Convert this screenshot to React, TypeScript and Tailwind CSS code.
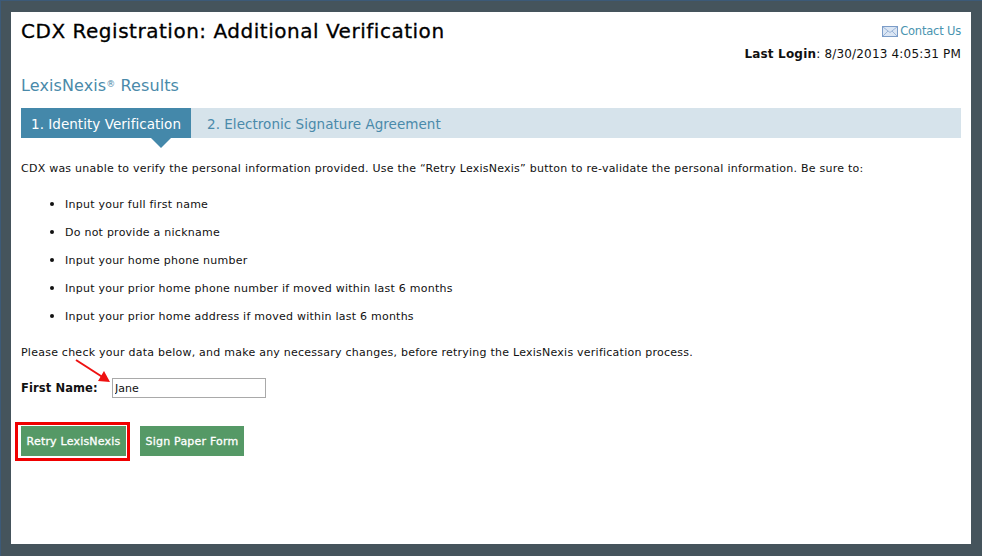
const items = [
  'Input your full first name',
  'Do not provide a nickname',
  'Input your home phone number',
  'Input your prior home phone number if moved within last 6 months',
  'Input your prior home address if moved within last 6 months',
];

const App = () => {
  return (
    <div className="h-[556px] w-[982px] overflow-hidden border-t border-l border-t-[#3c5a78] border-l-[#3c5a78] bg-[#45545c] pl-[10px] pr-[11px] pt-[11px] font-['DejaVu_Sans',sans-serif] text-[11px] text-[#111]">
      <div className="relative h-[532px] w-[960px] bg-white px-[10px]">
        {/* Header */}
        <div className="flex justify-between">
          <h1 className="pt-[7px] text-[20px] leading-[24px] font-normal tracking-[0.52px] text-black [-webkit-text-stroke:0.3px_black]">
            CDX Registration: Additional Verification
          </h1>
          <div className="flex flex-col items-end pt-[12px]">
            <a className="flex h-[15px] items-center text-[11.5px] tracking-[-0.2px] text-[#4a94b0]">
              <svg width="16" height="11" viewBox="0 0 16 11" className="mr-[2px]">
                <rect x="0.5" y="0.5" width="15" height="10" fill="#dbe6f4" stroke="#7b9cc8" />
                <path d="M1 1 L8 6.5 L15 1 M1 10 L6 5 M15 10 L10 5" fill="none" stroke="#9db6d8" />
              </svg>
              Contact Us
            </a>
            <div className="mt-[8px] h-[14px] text-[12px] leading-[15px] tracking-[0.18px]">
              <span className="font-bold">Last Login</span>: 8/30/2013 4:05:31 PM
            </div>
          </div>
        </div>

        <h2 className="mt-[15px] text-[16px] leading-[20px] font-normal tracking-[0.1px] text-[#4a8aaa]">
          LexisNexis<sup className="text-[9px]">®</sup> Results
        </h2>

        {/* Tabs */}
        <div className="mt-[12px] flex h-[30px] items-center bg-[#d6e3eb] text-[13.5px] tracking-[0.04px]">
          <div className="relative flex h-[30px] w-[170px] items-center bg-[#4488aa] pt-[2px] pl-[10px] text-white">
            1. Identity Verification
            <span className="absolute left-[130px] top-[30px] h-0 w-0 border-x-[10px] border-t-[10px] border-x-transparent border-t-[#4488aa]" />
          </div>
          <div className="pt-[2px] pl-[16px] text-[#4a8aaa]">2. Electronic Signature Agreement</div>
        </div>

        {/* Body */}
        <p className="mt-[23px] leading-[16px] tracking-[0.24px]">
          CDX was unable to verify the personal information provided. Use the “Retry LexisNexis” button to re-validate the personal information. Be sure to:
        </p>
        <ul className="mt-[18px] ml-[44px] list-disc leading-[16px] tracking-[0.24px] marker:text-[14px]">
          {items.map((t) => (
            <li key={t} className="mb-[10px]">{t}</li>
          ))}
        </ul>
        <p className="mt-[20px] leading-[16px] tracking-[0.24px]">
          Please check your data below, and make any necessary changes, before retrying the LexisNexis verification process.
        </p>

        {/* Field */}
        <div className="mt-[17px] flex items-center">
          <label className="w-[91px] pt-[2px] text-[11.5px] font-bold tracking-[0.1px]">First Name:</label>
          <input
            defaultValue="Jane"
            className="h-[20px] w-[154px] border border-[#a9a9a9] px-[2px] text-[11px] text-[#111] outline-none"
          />
        </div>

        {/* Buttons */}
        <div className="mt-[24px] -ml-[6px] flex items-start">
          <div className="border-[3px] border-[#f00000] pt-[1px] pr-[1px] pb-[2px] pl-[3px]">
            <button className="block h-[30px] w-[105px] bg-[#559966] pt-[2px] text-[11px] tracking-[0.2px] text-white [-webkit-text-stroke:0.3px_white]">Retry LexisNexis</button>
          </div>
          <button className="mt-[4px] ml-[10px] h-[30px] w-[104px] bg-[#559966] pt-[2px] text-[11px] tracking-[0.2px] text-white [-webkit-text-stroke:0.3px_white]">Sign Paper Form</button>
        </div>

        {/* Annotation arrow */}
        <svg className="absolute left-[60px] top-[345px]" width="50" height="32" viewBox="0 0 50 32">
          <path d="M5 3 L33 21" stroke="#ee1111" strokeWidth="2" fill="none" />
          <path d="M39 25 L27 24 L33 14 Z" fill="#ee1111" />
        </svg>
      </div>
    </div>
  );
};

export default App;
